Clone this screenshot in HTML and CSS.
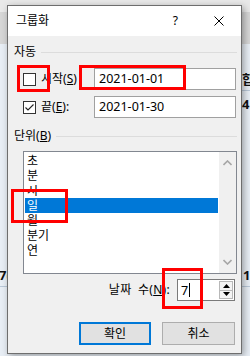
FILE: index.html
```html
<!DOCTYPE html>
<html lang="ko">
<head>
<meta charset="utf-8">
<title>그룹화</title>
<link rel="stylesheet" href="styles.css">
</head>
<body>
<div class="sheet">
  <span class="cell c-hap">합</span>
  <span class="cell c-4">4</span>
  <span class="cell c-7">7(</span>
  <span class="cell c-1">1</span>
  <div class="gridline g1"></div>
  <div class="gridline g2"></div>
</div>

<div class="dialog">
  <div class="titlebar">
    <span class="title">그룹화</span>
    <span class="help">?</span>
    <span class="close">
      <svg width="10" height="10" viewBox="0 0 10 10"><path d="M0.5 0.5 L9.5 9.5 M9.5 0.5 L0.5 9.5" stroke="#000" stroke-width="1" fill="none"/></svg>
    </span>
  </div>
  <div class="content">
    <div class="group-head"><span>자동</span><i class="rule"></i></div>
    <div class="row first">
      <label class="check-label"><span class="checkbox"></span><span>시작(<u>S</u>)</span></label>
      <div class="textbox">2021-01-01</div>
    </div>
    <div class="row second">
      <label class="check-label"><span class="checkbox">
        <svg width="11" height="11" viewBox="0 0 11 11"><path d="M1.5 5.5 L4 8 L9.5 2.5" stroke="#222" stroke-width="1.1" fill="none"/></svg>
      </span><span>끝(<u>E</u>):</span></label>
      <div class="textbox">2021-01-30</div>
    </div>
    <div class="group-head g2h"><span>단위(<u>B</u>)</span><i class="rule"></i></div>
    <div class="listbox">
      <ul class="items">
        <li>초</li>
        <li>분</li>
        <li>시</li>
        <li class="sel">일</li>
        <li>월</li>
        <li>분기</li>
        <li>연</li>
      </ul>
      <div class="scrollbar">
        <svg width="9" height="6" viewBox="0 0 9 6"><path d="M0.5 5 L4.5 1 L8.5 5" stroke="#a6a6a6" stroke-width="1.6" fill="none"/></svg>
        <svg width="9" height="6" viewBox="0 0 9 6"><path d="M0.5 1 L4.5 5 L8.5 1" stroke="#a6a6a6" stroke-width="1.6" fill="none"/></svg>
      </div>
    </div>
    <div class="spin-row">
      <span class="spin-label">날짜 수(<u>N</u>):</span>
      <div class="spinbox">
        <span class="spin-value">7<i class="caret"></i></span>
        <span class="spin-btns">
          <span class="spin-btn"><svg width="7" height="4" viewBox="0 0 7 4"><path d="M0 4 L3.5 0 L7 4 Z" fill="#000"/></svg></span>
          <span class="spin-btn"><svg width="7" height="4" viewBox="0 0 7 4"><path d="M0 0 L7 0 L3.5 4 Z" fill="#000"/></svg></span>
        </span>
      </div>
    </div>
    <div class="buttons">
      <button class="btn default">확인</button>
      <button class="btn">취소</button>
    </div>
  </div>
</div>

<div class="mark m1"></div>
<div class="mark m2"></div>
<div class="mark m3"></div>
<div class="mark m4"></div>
</body>
</html>
```

FILE: styles.css
```css
* { box-sizing: border-box; }
html, body { margin: 0; padding: 0; }
body {
  width: 250px;
  height: 356px;
  position: relative;
  overflow: hidden;
  font-family: "Noto Sans", "Noto Sans CJK KR", sans-serif;
  font-size: 12px;
  color: #000;
  background: linear-gradient(to bottom, #e9e9e9 0, #e9e9e9 12px, #d6d6d6 12px, #d6d6d6 44px, #e8eef5 44px);
}

/* spreadsheet behind the dialog */
.sheet { position: absolute; inset: 0; }
.cell { position: absolute; font-weight: bold; font-size: 13px; line-height: 14px; color: #111; }
.c-hap { left: 242px; top: 72px; }
.c-4 { left: 242px; top: 97px; }
.c-7 { left: -1px; top: 268px; }
.c-1 { left: 243px; top: 268px; }
.gridline { position: absolute; height: 1px; background: #b9c8d8; }
.g1 { left: 240px; width: 10px; top: 90px; }
.g2 { left: 0; width: 250px; top: 286px; }

/* dialog window */
.dialog {
  position: absolute;
  left: 7px;
  top: 5px;
  width: 235px;
  height: 349px;
  border: 1px solid #6e6e6e;
  background: #f0f0f0;
  box-shadow: 2px 2px 7px rgba(0, 0, 0, 0.35);
  display: flex;
  flex-direction: column;
}
.titlebar {
  height: 30px;
  background: #fff;
  display: flex;
  align-items: center;
  padding-left: 8px;
}
.title { font-size: 12px; line-height: 14px; }
.help { margin-left: auto; margin-right: 19px; font-size: 12px; line-height: 14px; }
.close { width: 44px; height: 30px; display: flex; align-items: center; justify-content: center; }
.close svg { display: block; }

.content {
  flex: 1;
  padding: 0 4px 0 6px;
  display: flex;
  flex-direction: column;
}
.group-head {
  margin-top: 8px;
  height: 16px;
  display: flex;
  align-items: center;
  line-height: 16px;
}
.group-head.g2h { margin-top: 10px; }
.rule {
  flex: 1;
  height: 1px;
  background: #dcdcdc;
  margin-left: 5px;
}

.row {
  height: 22px;
  display: flex;
  align-items: center;
}
.row.first { margin-top: 8px; }
.row.second { margin-top: 6px; }
.check-label {
  width: 80px;
  padding-left: 9px;
  display: flex;
  align-items: center;
  line-height: 14px;
}
.checkbox {
  width: 13px;
  height: 13px;
  border: 1px solid #333;
  background: #fff;
  margin-right: 5px;
  display: flex;
  align-items: center;
  justify-content: center;
}
.checkbox svg { display: block; }
.textbox {
  flex: 1;
  height: 22px;
  margin-right: 1px;
  border: 1px solid #a0a0a0;
  background: #fff;
  padding-left: 4px;
  line-height: 20px;
  font-size: 12.5px;
}

.listbox {
  margin-top: 7px;
  margin-left: 9px;
  height: 123px;
  border: 1px solid #828790;
  background: #fff;
  display: flex;
}
.items {
  list-style: none;
  margin: 0;
  padding: 1px;
  flex: 1;
}
.items li {
  height: 15px;
  line-height: 15px;
  padding-left: 2px;
  overflow: hidden;
}
.items li.sel { background: #0078d7; color: #fff; }
.scrollbar {
  width: 17px;
  background: #f0f0f0;
  display: flex;
  flex-direction: column;
  justify-content: space-between;
  align-items: center;
  padding: 8px 0 8px;
}
.scrollbar svg { display: block; }

.spin-row {
  margin-top: 5px;
  height: 22px;
  display: flex;
  align-items: center;
  justify-content: flex-end;
}
.spin-label { margin-right: 7px; line-height: 14px; word-spacing: 3px; letter-spacing: 0.3px; }
.spinbox {
  width: 58px;
  height: 22px;
  margin-right: 2px;
  border: 1px solid #7a7a7a;
  background: #fff;
  display: flex;
}
.spin-value {
  flex: 1;
  padding-left: 3px;
  display: flex;
  align-items: center;
  font-size: 12.5px;
}
.caret { display: block; width: 1px; height: 14px; background: #000; margin-left: 1px; }
.spin-btns {
  width: 15px;
  padding: 1px 1px 1px 0;
  display: flex;
  flex-direction: column;
}
.spin-btn {
  flex: 1;
  border: 1px solid #b8b8b8;
  background: #f4f4f4;
  display: flex;
  align-items: center;
  justify-content: center;
}
.spin-btn + .spin-btn { border-top: none; }
.spin-btn svg { display: block; }

.buttons {
  margin-top: 21px;
  margin-right: 2px;
  display: flex;
  justify-content: flex-end;
  gap: 11px;
}
.btn {
  width: 73px;
  height: 23px;
  border: 1px solid #adadad;
  background: #e1e1e1;
  font-family: "Noto Sans", "Noto Sans CJK KR", sans-serif;
  font-size: 12px;
  line-height: 14px;
  color: #000;
  padding: 0;
}
.btn.default { width: 72px; border: 2px solid #0078d7; }

/* red annotation boxes */
.mark {
  position: absolute;
  border: 3px solid #ff0000;
}
.m1 { left: 17px; top: 65px; width: 33px; height: 27px; }
.m2 { left: 79px; top: 65px; width: 107px; height: 25px; }
.m3 { left: 11px; top: 189px; width: 57px; height: 34px; }
.m4 { left: 162px; top: 268px; width: 41px; height: 41px; }
```
